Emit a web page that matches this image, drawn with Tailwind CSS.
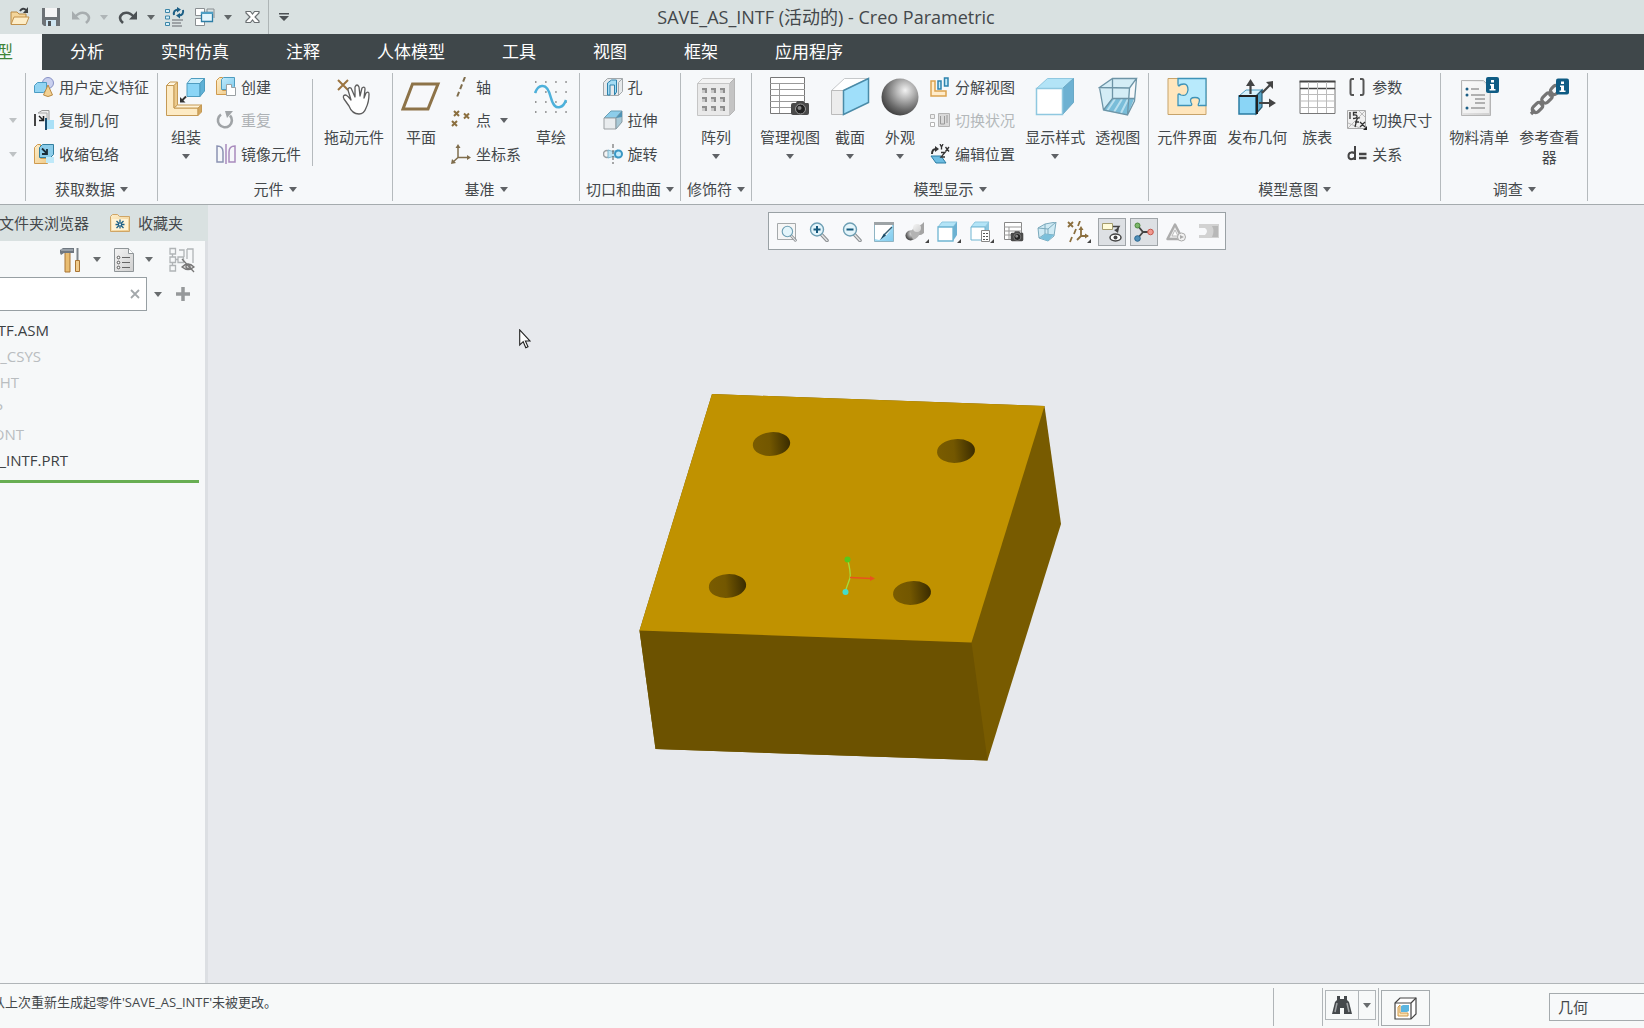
<!DOCTYPE html>
<html lang="zh-CN">
<head>
<meta charset="utf-8">
<meta name="viewport" content="width=device-width, initial-scale=1">
<title>SAVE_AS_INTF (活动的) - Creo Parametric</title>
<script src="https://cdn.jsdelivr.net/npm/@tailwindcss/browser@4"></script>
</head>
<body class="flex h-screen flex-col overflow-hidden bg-[#e7e9ed] font-['Open_Sans','Noto_Sans_CJK_SC',sans-serif] text-[15px] leading-5 text-[#44484b]">

<!-- Shared symbols and gradients -->
<svg class="absolute size-0" aria-hidden="true">
  <defs>
    <symbol id="caret" viewBox="0 0 8 5"><path d="M0 0h8L4 5z" fill="currentColor" opacity=".85"/></symbol>
    <linearGradient id="blueFace" x1="0" y1="0" x2="1" y2="1"><stop offset="0" stop-color="#c4ecfb"/><stop offset="1" stop-color="#7fcbee"/></linearGradient>
    <linearGradient id="greyFace" x1="0" y1="0" x2="1" y2="1"><stop offset="0" stop-color="#f4f4f4"/><stop offset="1" stop-color="#cfcfcf"/></linearGradient>
    <linearGradient id="tan" x1="0" y1="0" x2="1" y2="1"><stop offset="0" stop-color="#fdeecb"/><stop offset="1" stop-color="#efcb8a"/></linearGradient>
    <radialGradient id="ball" cx=".64" cy=".32" r=".7"><stop offset="0" stop-color="#f2f2f2"/><stop offset=".35" stop-color="#b4b4b4"/><stop offset=".75" stop-color="#6b6b6b"/><stop offset="1" stop-color="#444"/></radialGradient>
    <linearGradient id="hole" x1="0" y1="0" x2="1" y2="0"><stop offset="0" stop-color="#7a5c00"/><stop offset=".45" stop-color="#735700"/><stop offset="1" stop-color="#3a2c00"/></linearGradient>
    <symbol id="camera" viewBox="0 0 20 16"><path d="M1 5q0-2 2-2h3l1-2h6l2 2h3q1 0 1 2v8q0 2-2 2H3q-2 0-2-2z" fill="#4a4a4a"/><circle cx="10.500" cy="9" r="5" fill="#222" stroke="#999"/><circle cx="9.500" cy="8" r="2" fill="#888"/></symbol>
    <symbol id="lens" viewBox="0 0 20 20"><path d="M12 12l6 6.500" stroke="#8b8f92" stroke-width="3.500" stroke-linecap="round"/><path d="M12 12l6 6.500" stroke="#e2e4e5" stroke-width="1.500" stroke-linecap="round"/><circle cx="8" cy="7.500" r="6.500" fill="#e4f5fb" stroke="#6e9fb4" stroke-width="1.400"/></symbol>
    <symbol id="info" viewBox="0 0 13 16"><rect width="13" height="16" rx="2" fill="#0f5c84"/><path d="M5 3h3v2.500H5zM4 7h4v5h1.500v1.500h-6V12H5V8.500H4z" fill="#fff"/></symbol>
    <symbol id="more" viewBox="0 0 4 4"><path d="M4 0v4H0z" fill="#444"/></symbol>
  </defs>
</svg>

<!-- Title bar -->
<header class="grid h-[34px] shrink-0 grid-cols-[1fr_auto_1fr] items-center bg-[#d9e1e1]">
  <div class="flex h-full items-center gap-2.5 pl-2.5" role="toolbar" aria-label="快速访问">
    <button aria-label="打开"><svg class="size-5" viewBox="0 0 20 20"><path d="M1 17V5h6l2 2h7v3" fill="#f3d59b" stroke="#b98a45"/><path d="M1 17.500L4 10h15l-3 7.500z" fill="#fdedc8" stroke="#c2924c"/><path d="M10 4q3-4 6-1" fill="none" stroke="#3b3f42" stroke-width="2"/><path d="M18 0v6h-5z" fill="#3b3f42"/></svg></button>
    <button aria-label="保存" class="ml-px"><svg class="size-5" viewBox="0 0 20 20"><path d="M1 1h18v18H3l-2-2z" fill="#6d7276"/><path d="M4 1h12v9H4z" fill="#f5f5f5"/><path d="M5 13h10v6H5z" fill="#cfe6f2"/><path d="M7 14h3v5H7z" fill="#4f5356"/></svg></button>
    <button aria-label="撤消" class="flex items-center gap-[9px] text-[#a7adaf]"><svg class="size-5" viewBox="0 0 20 20"><path d="M4 10q5-6 11-3.500 6 4 0 9.500" fill="none" stroke="currentColor" stroke-width="2.600"/><path d="M1 4v8.500h8z" fill="currentColor"/></svg><svg class="h-[5px] w-2"><use href="#caret"/></svg></button>
    <button aria-label="重做" class="flex items-center gap-[9px] text-[#4c5154]"><svg class="size-5" viewBox="0 0 20 20"><path d="M16 10Q11 4 5 6.500q-6 4 0 9.500" fill="none" stroke="currentColor" stroke-width="2.600"/><path d="M19 4v8.500h-8z" fill="currentColor"/></svg><svg class="h-[5px] w-2"><use href="#caret"/></svg></button>
    <button aria-label="重新生成"><svg class="size-5" viewBox="0 0 20 20"><g fill="#d7f0fa" stroke="#3d86a8"><path d="M.500 2.500h4v3h-4zM.500 9h4v3h-4zM.500 15.500h4v3h-4z"/></g><path d="M7 13h11M7 16h9M7 19h10" stroke="#8a8f92" stroke-width="1.500"/><path d="M9 8q-1-5 4-5.500M18 3q1 5-4 5.500" fill="none" stroke="#1d5f86" stroke-width="2"/><path d="M12 0l4 2.500-4 3zM15 6l-4 2.500 4 3z" fill="#1d5f86"/></svg></button>
    <button aria-label="窗口" class="flex items-center gap-[9px] text-[#4c5154]"><svg class="size-5" viewBox="0 0 20 20"><path d="M.500 1.500h9v7h-9z" fill="#fff" stroke="#8a8f92"/><path d="M.500 11.500h9v7h-9z" fill="#fff" stroke="#8a8f92"/><path d="M12 5V2h7v9" fill="none" stroke="#8a8f92"/><path d="M6.500 5.500h11v9h-11z" fill="#e3f5fc" stroke="#2d7ea6" stroke-width="1.300"/><path d="M6 5h12v2H6z" fill="#4f9fc4"/></svg><svg class="h-[5px] w-2"><use href="#caret"/></svg></button>
    <button aria-label="关闭"><svg class="size-5" viewBox="0 0 20 20"><path d="M4 4.500h4.500L10.500 7l2-2.500H17v1.500L13 10l4 4v1.500h-4.500l-2-2.500-2 2.500H4V14l4-4-4-4z" fill="#fff" stroke="#6a6f72" stroke-width="1.200"/></svg></button>
    <div class="-ml-1 h-full w-px bg-[#aeb5b6]"></div>
    <button aria-label="自定义快速访问工具栏"><svg class="h-2 w-[10px]" viewBox="0 0 10 8"><path d="M0 0h10v1.500H0zM0 3h10L5 8z" fill="#4c5154"/></svg></button>
  </div>
  <h1 class="pl-2 text-[18px] leading-6 whitespace-nowrap">SAVE_AS_INTF (活动的) - Creo Parametric</h1>
  <div></div>
</header>

<!-- Ribbon tabs -->
<nav class="flex h-9 shrink-0 gap-px bg-[#3f474a] text-[17px] text-white" role="tablist">
  <button role="tab" aria-selected="true" class="-mr-px flex w-[42px] items-center justify-end overflow-hidden bg-[#f7f9fa] pr-[29px] text-[#3f8438]">型</button>
  <button role="tab" class="px-7">分析</button>
  <button role="tab" class="px-7">实时仿真</button>
  <button role="tab" class="px-7">注释</button>
  <button role="tab" class="px-7">人体模型</button>
  <button role="tab" class="px-7">工具</button>
  <button role="tab" class="px-7">视图</button>
  <button role="tab" class="px-7">框架</button>
  <button role="tab" class="px-7">应用程序</button>
</nav>

<!-- Ribbon -->
<section class="flex h-[135px] shrink-0 border-b border-[#a5abae] bg-[#f6f8fa]">
  <div class="grid h-[101px] w-[25px] shrink-0 grid-rows-3 items-center justify-center text-[#b4b8ba]">
    <span></span>
    <button aria-label="更多"><svg class="h-[5px] w-2"><use href="#caret"/></svg></button>
    <button aria-label="更多"><svg class="h-[5px] w-2"><use href="#caret"/></svg></button>
  </div>
  <div class="my-[3px] w-px shrink-0 bg-[#b5babd]"></div>

  <div class="flex shrink-0 flex-col px-2">
    <div class="grid h-[101px] grid-rows-3">
      <button class="flex items-center gap-[5px]"><svg class="size-5" viewBox="0 0 20 20"><circle cx="14" cy="6" r="5.500" fill="#c9d0ef" stroke="#8791c4"/><path d="M.500 8.500l3-3h9v7l-3 3h-9z" fill="#93d4f2" stroke="#4a9cc4"/><path d="M14 8l4.500 10q-4.500 3-9 0z" fill="#f2d193" stroke="#b98a45"/></svg>用户定义特征</button>
      <button class="flex items-center gap-[5px]"><svg class="size-5" viewBox="0 0 20 20"><path d="M4 3l4-2.500h7v9l-2 2" fill="#eee" stroke="#9a9a9a"/><path d="M4 3h9v9" fill="none" stroke="#aaa"/><path d="M1 4v12" stroke="#444" stroke-width="2"/><path d="M5 6l4 4M9.500 6v4.500H5" stroke="#222" stroke-width="1.500" fill="none"/><path d="M12 10h8v9h-8z" fill="#a9e0f7"/><path d="M12 8v12" stroke="#1b4f72" stroke-width="2"/></svg>复制几何</button>
      <button class="flex items-center gap-[5px]"><svg class="size-5" viewBox="0 0 20 20"><path d="M.500 3.500l3-3h3v14h7v5H.500z" fill="url(#tan)" stroke="#cf9a4d"/><path d="M5.500 3.500l3-3h11v10l-3 3h-11z" fill="#8ccdea" stroke="#337f9f"/><path d="M8 4.500l4.500 4.500M13 5v5H8" stroke="#1a2d38" stroke-width="1.800" fill="none"/><path d="M12 13h8v6h-8z" fill="#bfe9f9"/></svg>收缩包络</button>
    </div>
    <button class="flex h-[33px] items-center justify-center gap-[5px] pt-[3px]">获取数据<svg class="h-[5px] w-2"><use href="#caret"/></svg></button>
  </div>
  <div class="my-[3px] w-px shrink-0 bg-[#b5babd]"></div>

  <div class="flex shrink-0 flex-col px-2">
    <div class="flex h-[101px] gap-2.5">
      <button class="flex w-10 flex-col items-center pt-1.5"><svg class="size-10" viewBox="0 0 40 40"><g stroke="#c59a55" stroke-linejoin="round"><path d="M.500 9.500H8V32h24v7.500H.500z" fill="#fdebc5"/><path d="M.500 9.500L4 6h7.500L8 9.500z" fill="#fff6e0"/><path d="M8 9.500L11.500 6v23L8 32z" fill="#eccb8d"/><path d="M8 32l3.500-3h24L32 32z" fill="#fff3d8"/><path d="M32 32l3.500-3v7L32 39.500z" fill="#d3a75f"/></g><g stroke="#4f9dc0" stroke-linejoin="round"><path d="M21 7.500h13v13H21z" fill="#8ad5f6"/><path d="M21 7.500l4-5h13.500l-4.500 5z" fill="#c9eefb"/><path d="M34 7.500l4.500-5V15L34 20.500z" fill="#5fb1d6"/></g><path d="M20 20.500l-4 4" stroke="#333" stroke-width="1.800"/><path d="M14 21v5.500h5.500z" fill="#333"/></svg><span class="mt-[11px]">组装</span><svg class="mt-[7px] h-[5px] w-2"><use href="#caret"/></svg></button>
      <div class="grid grid-rows-3">
        <button class="flex items-center gap-[5px]"><svg class="size-5" viewBox="0 0 20 20"><path d="M.500 3.500l3-3h3v13h6v4H.500z" fill="url(#tan)" stroke="#cf9a4d"/><path d="M5.500 2.500l2-2h11v9l-2 3h-11z" fill="url(#blueFace)" stroke="#4f9dc0"/><path d="M10.500 7.500h5v3h4v8h-9z" fill="#fff" stroke="#9aa0a3"/></svg>创建</button>
        <button class="flex items-center gap-[5px] text-[#aeb2b5]" disabled><svg class="size-5" viewBox="0 0 20 20"><path d="M5 4.500a7 7 0 1 0 9 1" fill="none" stroke="#a0a4a7" stroke-width="2.600"/><path d="M9 1h8l-6 7z" fill="#a0a4a7"/></svg>重复</button>
        <button class="flex items-center gap-[5px]"><svg class="size-5" viewBox="0 0 20 20" fill="none" stroke-width="1.500"><path d="M1 2q6 0 6 6v10H1z" stroke="#8c93b3"/><path d="M19 2q-6 0-6 6v10h6z" stroke="#a98bbd"/><path d="M10 0v20" stroke="#a98bbd"/></svg>镜像元件</button>
      </div>
      <div class="mt-[9px] ml-px h-[87px] w-px bg-[#b5babd]"></div>
      <button class="ml-px flex flex-col items-center pt-1.5"><svg class="size-10" viewBox="0 0 40 40"><path d="M4 4l10 10M14 4L4 14" stroke="#9b7440" stroke-width="2"/><path d="M14 14l4 4" stroke="#555"/><path d="M16 30l-5-7q-2-4 2-4 2 1 5 5l-3-10q0-3 3-2l4 9V11q2-4 4 0l1 9 2-8q3-2 3 1l-1 9 2-5q3-2 3 1 0 8-3 14-2 6-7 6-7 0-10-8z" transform="translate(-1 0)" fill="#fff" stroke="#5c5c5c" stroke-width="1.300" stroke-linejoin="round"/></svg><span class="mt-[11px]">拖动元件</span></button>
    </div>
    <button class="flex h-[33px] items-center justify-center gap-[5px] pt-[3px]">元件<svg class="h-[5px] w-2"><use href="#caret"/></svg></button>
  </div>
  <div class="my-[3px] w-px shrink-0 bg-[#b5babd]"></div>

  <div class="flex shrink-0 flex-col px-2">
    <div class="flex h-[101px] gap-2.5">
      <button class="flex w-10 flex-col items-center pt-1.5"><svg class="size-10" viewBox="0 0 40 40"><path d="M11.500 8h25.500l-10 25H2z" fill="#f7f8fa" stroke="#8d7348" stroke-width="3"/></svg><span class="mt-[11px]">平面</span></button>
      <div class="grid grid-rows-3">
        <button class="flex items-center gap-[5px]"><svg class="size-5" viewBox="0 0 20 20"><path d="M14 0L6 20" stroke="#7f6d4c" stroke-width="2" stroke-dasharray="5 3"/></svg>轴</button>
        <button class="flex items-center gap-[5px]"><svg class="size-5" viewBox="0 0 20 20"><path d="M3 1l5 5M8 1L3 6M13 3.500l5 5M18 3.500l-5 5M1 11l5 5M6 11l-5 5" stroke="#8b6f3f" stroke-width="2"/></svg>点<svg class="ml-1 h-[5px] w-2"><use href="#caret"/></svg></button>
        <button class="flex items-center gap-[5px]"><svg class="size-5" viewBox="0 0 20 20"><path d="M7 3v10.500h10M7 13.500l-5 4.500" fill="none" stroke="#7f6d4c" stroke-width="1.500"/><path d="M7 0l2.500 4h-5zM20 13.500L16 16v-5zM0 20l1-5 4 4z" fill="#7f6d4c"/></svg>坐标系</button>
      </div>
      <button class="flex w-10 flex-col items-center pt-1.5"><svg class="size-10" viewBox="0 0 40 40"><path d="M4 6h32M4 16h32M4 26h32M4 36h32" stroke="#777" stroke-width="1.500" stroke-dasharray="1.500 8.600"/><path d="M4 17Q7 9 12 10q5 0 8 12 3 11 9 9 4-1 6-7" fill="none" stroke="#4db1db" stroke-width="2.500"/></svg><span class="mt-[11px]">草绘</span></button>
    </div>
    <button class="flex h-[33px] items-center justify-center gap-[5px] pt-[3px]">基准<svg class="h-[5px] w-2"><use href="#caret"/></svg></button>
  </div>
  <div class="my-[3px] w-px shrink-0 bg-[#b5babd]"></div>

  <div class="flex shrink-0 flex-col items-center px-1.5">
    <div class="grid h-[101px] grid-rows-3">
      <button class="flex items-center gap-[5px]"><svg class="size-5" viewBox="0 0 20 20"><path d="M.500 5.500l4-4h15v13l-4 4H.500z" fill="#e6e9eb" stroke="#a3a8ab"/><path d="M15.500 18.500v-13l4-4" fill="none" stroke="#a3a8ab"/><path d="M4.500 18V6l4-3h5v12l-2 3V8H7v10z" fill="#a4dcf4" stroke="#2e83ad"/></svg>孔</button>
      <button class="flex items-center gap-[5px]"><svg class="size-5" viewBox="0 0 20 20"><path d="M1 8l7-7h11l-6 7z" fill="#8ccdea" stroke="#6a9fb5"/><path d="M1 8h12v11H1z" fill="#e9ecee" stroke="#9ba0a3"/><path d="M13 8l6-7v11l-6 7z" fill="#a9c9d6" stroke="#8a9ba3"/><path d="M13 8l6-7v6z" fill="#4e93b4"/></svg>拉伸</button>
      <button class="flex items-center gap-[5px]"><svg class="size-5" viewBox="0 0 20 20"><circle cx="4" cy="10" r="3.500" fill="#f4f4f4" stroke="#9ba0a3" stroke-width="1.500"/><path d="M5 6q5 3 10 0v8q-5-3-10 0z" fill="#bfe4f3" stroke="#7fb6cd"/><circle cx="15.500" cy="10" r="3.500" fill="#c4ebfa" stroke="#3a97c4" stroke-width="2"/><path d="M10 0v20" stroke="#555" stroke-dasharray="4 2"/></svg>旋转</button>
    </div>
    <button class="flex h-[33px] items-center justify-center gap-[5px] pt-[3px]">切口和曲面<svg class="h-[5px] w-2"><use href="#caret"/></svg></button>
  </div>
  <div class="my-[3px] w-px shrink-0 bg-[#b5babd]"></div>

  <div class="flex shrink-0 flex-col items-center px-1.5">
    <div class="flex h-[101px]">
      <button class="flex w-10 flex-col items-center pt-1.5"><svg class="size-10" viewBox="0 0 40 40"><path d="M1.500 7.500l5-5h32l-5 5z" fill="#f3f3f3" stroke="#ccc"/><path d="M33.500 7.500l5-5v32l-5 5z" fill="#c4c4c4" stroke="#b5b5b5"/><path d="M1.500 7.500h32v32h-32z" fill="#e9e9e9" stroke="#c5c5c5"/><g fill="#8d8d8d"><path d="M6 12h5v5H6zM15 12h5v5h-5zM24 12h5v5h-5zM6 21h5v5H6zM15 21h5v5h-5zM24 21h5v5h-5zM6 30h5v5H6zM15 30h5v5h-5zM24 30h5v5h-5z"/></g><g fill="#c8c8c8"><path d="M6 14h3v3H6zM15 14h3v3h-3zM24 14h3v3h-3zM6 23h3v3H6zM15 23h3v3h-3zM24 23h3v3h-3zM6 32h3v3H6zM15 32h3v3h-3zM24 32h3v3h-3z"/></g></svg><span class="mt-[11px]">阵列</span><svg class="mt-[7px] h-[5px] w-2"><use href="#caret"/></svg></button>
    </div>
    <button class="flex h-[33px] items-center justify-center gap-[5px] pt-[3px]">修饰符<svg class="h-[5px] w-2"><use href="#caret"/></svg></button>
  </div>
  <div class="my-[3px] w-px shrink-0 bg-[#b5babd]"></div>

  <div class="flex shrink-0 flex-col px-2">
    <div class="flex h-[101px] gap-2.5">
      <button class="flex flex-col items-center pt-1.5"><svg class="size-10" viewBox="0 0 40 40"><path d="M.500 1.500h34v36H.500z" fill="#fff" stroke="#777"/><path d="M0 7.500h35M0 13.500h35M0 19.500h35M0 25.500h35M0 31.500h35M9.500 7v30" stroke="#999"/><use href="#camera" x="20" y="24" width="20" height="16"/></svg><span class="mt-[11px]">管理视图</span><svg class="mt-[7px] h-[5px] w-2"><use href="#caret"/></svg></button>
      <button class="flex w-10 flex-col items-center pt-1.5"><svg class="size-10" viewBox="0 0 40 40"><path d="M1.500 14.500l13-12h24l-25 12z" fill="#fff" stroke="#c5c8ca"/><path d="M1.500 14.500h12v24h-12z" fill="#ececec" stroke="#bbb"/><path d="M13.500 14.500l25-12v24l-25 12z" fill="#9fdffa" stroke="#4a8ba8" stroke-width="1.500"/></svg><span class="mt-[11px]">截面</span><svg class="mt-[7px] h-[5px] w-2"><use href="#caret"/></svg></button>
      <button class="flex w-10 flex-col items-center pt-1.5"><svg class="size-10" viewBox="0 0 40 40"><circle cx="20" cy="21" r="18.500" fill="url(#ball)"/></svg><span class="mt-[11px]">外观</span><svg class="mt-[7px] h-[5px] w-2"><use href="#caret"/></svg></button>
      <div class="grid grid-rows-3">
        <button class="flex items-center gap-[5px]"><svg class="size-5" viewBox="0 0 20 20"><path d="M1 4h4v10h11v5H1z" fill="#ffeccb" stroke="#dba24f" stroke-width="1.500"/><path d="M8 4h3v8H8zM14.500 1h3.500v8h-3.500z" fill="#c4ebfa" stroke="#2e83ad" stroke-width="1.500"/></svg>分解视图</button>
        <button class="flex items-center gap-[5px] text-[#b4b8ba]" disabled><svg class="size-5" viewBox="0 0 20 20" stroke="#b4b4b4"><path d="M.500 4.500h4v4h-4z" fill="#eee"/><path d="M.500 12.500h4v4h-4z" fill="#fff"/><path d="M8.500 3.500h11v13h-11z" fill="#d9d9d9"/><path d="M10.500 6v8h4V6M17 5v8" stroke="#999" fill="none"/></svg>切换状况</button>
        <button class="flex items-center gap-[5px]"><svg class="size-5" viewBox="0 0 20 20"><path d="M1 12h10l5 7H6z" fill="#6dbde2" stroke="#2b7ca3"/><path d="M2 10q0-5 4-5" stroke="#333" stroke-width="2" fill="none"/><path d="M5 2l4 3-4 3z" fill="#333"/><path d="M10 0l1.500 3L13 0M11.500 3v2.500M15.500 3l3.500 4.500M19 3l-3.500 4.500M11 8.500h4l-4 4.500h4" stroke="#333" stroke-width="1.300" fill="none"/></svg>编辑位置</button>
      </div>
      <button class="flex flex-col items-center pt-1.5"><svg class="size-10" viewBox="0 0 40 40"><path d="M1.500 12.500l11-10h26l-11 10z" fill="#b3e4f7" stroke="#8fc8e0"/><path d="M27.500 12.500l11-10v24l-11 12z" fill="#6db1d2" stroke="#6aa9c6"/><path d="M1.500 12.500h26v26h-26z" fill="#fff" stroke="#8fc8e0" stroke-width="1.500"/></svg><span class="mt-[11px]">显示样式</span><svg class="mt-[7px] h-[5px] w-2"><use href="#caret"/></svg></button>
      <button class="flex flex-col items-center pt-1.5"><svg class="size-10" viewBox="0 0 40 40"><path d="M1.500 10.500l13-8h24l-6 9 -3 27.500-24-4z" fill="#d4edf6"/><path d="M5.500 34l9-12h22l-7 17z" fill="#79bdd9"/><path d="M9 35l8-12M16 36l8-13M23 37l7-14" stroke="#b8dfee" stroke-width="2"/><path d="M1.500 11.500l13-9h24l-7 9.500zM1.500 11.500l4 22.500 24 5 2-27M29.500 39l7-14 2-22.500M14.500 2.500v20l-9 11.500M14.500 22.500h22" fill="none" stroke="#6d94a6" stroke-width="1.300"/></svg><span class="mt-[11px]">透视图</span></button>
    </div>
    <button class="flex h-[33px] items-center justify-center gap-[5px] pt-[3px]">模型显示<svg class="h-[5px] w-2"><use href="#caret"/></svg></button>
  </div>
  <div class="my-[3px] w-px shrink-0 bg-[#b5babd]"></div>

  <div class="flex shrink-0 flex-col px-2">
    <div class="flex h-[101px] gap-2.5">
      <button class="flex flex-col items-center pt-1.5"><svg class="size-10" viewBox="0 0 40 40"><path d="M1 2.500h38v36H1z" fill="#ffe6bd" stroke="#c7a36a"/><path d="M11 2.500h28v27h-6q-3 1-1-3 2-5-4-5t-4 5q2 3-1 3H11V19q0-2 3 0 6 2 7-5 0-6-4-6t-5 2q-1 0-1-2z" fill="#b8eafc" stroke="#3e93b8" stroke-width="1.300"/></svg><span class="mt-[11px]">元件界面</span></button>
      <button class="flex flex-col items-center pt-1.5"><svg class="size-10" viewBox="0 0 40 40"><path d="M2 20l7-6h17l-7 6z" fill="#d6f2fc" stroke="#4f9dc0"/><path d="M2 20h17v18H2z" fill="#8ad5f6" stroke="#2b7ca3" stroke-width="1.500"/><path d="M19 20l6-6v17l-6 7z" fill="#57a6c9" stroke="#2b5f78" stroke-width="1.200"/><path d="M2 20h18v18" fill="none" stroke="#222" stroke-width="2"/><path d="M13.500 18V8M25 17l8-8M22 27h11" stroke="#444" stroke-width="2.200"/><path d="M13.500 3l4.500 7H9zM36 5v8l-7-7zM39 27l-7 4.500v-9z" fill="#444"/></svg><span class="mt-[11px]">发布几何</span></button>
      <button class="flex w-10 flex-col items-center pt-1.5"><svg class="size-10" viewBox="0 0 40 40"><path d="M3 5.500h35v32H3z" fill="#fff" stroke="#777"/><path d="M3 12.500h35" stroke="#444" stroke-width="1.500"/><path d="M2.500 5.500h36" stroke="#444" stroke-width="2"/><path d="M3 18.500h35M3 25h35M3 31.500h35M11.500 6v31M20.500 6v31M29.500 6v31" stroke="#bbb"/></svg><span class="mt-[11px]">族表</span></button>
      <div class="grid grid-rows-3">
        <button class="flex items-center gap-[5px]"><svg class="size-5" viewBox="0 0 20 20"><path d="M7 2H5Q3.500 2 3.500 4v12q0 2 1.500 2h2M13 2h2q1.500 0 1.500 2v12q0 2-1.500 2h-2" fill="none" stroke="#555" stroke-width="2"/></svg>参数</button>
        <button class="flex items-center gap-[5px]"><svg class="size-5" viewBox="0 0 20 20"><path d="M.500.500h18v18H.500z" fill="#f0f0f0" stroke="#aaa"/><path d="M1 18L18 1M1 13L13 18M12 1l6 6" stroke="#bbb"/><path d="M3 2v7M10 2.500H6.500v2.500q3.500-.500 3.500 1.500T6 8.500M13 8q-3-1-3.500 3L8 17M8 12h4M13 12l5 5M18 12l-5 5" fill="none" stroke="#333" stroke-width="1.300"/><path d="M20 16v4h-4z" fill="#222"/></svg>切换尺寸</button>
        <button class="flex items-center gap-[5px]"><svg class="size-5" viewBox="0 0 20 20"><path d="M8 2v14M8 9.500Q6 8 4 8.500 1.500 9 1.500 12t2.500 3.200q2.500 0 4-1.700" fill="none" stroke="#444" stroke-width="2"/><path d="M12 10h7.500M12 14h7.500" stroke="#444" stroke-width="2.500"/></svg>关系</button>
      </div>
    </div>
    <button class="flex h-[33px] items-center justify-center gap-[5px] pt-[3px]">模型意图<svg class="h-[5px] w-2"><use href="#caret"/></svg></button>
  </div>
  <div class="my-[3px] w-px shrink-0 bg-[#b5babd]"></div>

  <div class="flex shrink-0 flex-col px-2">
    <div class="flex h-[101px] gap-2.5">
      <button class="flex flex-col items-center pt-1.5"><svg class="size-10" viewBox="0 0 40 40"><path d="M2.500 4.500h22l7 7v28h-29z" fill="url(#greyFace)" stroke="#b5b5b5"/><path d="M4 6h20l6 6v25H4z" fill="#fff" opacity=".6"/><path d="M12 13h8M12 19h14M16 23h10M16 27h10M12 32h14" stroke="#9a9a9a" stroke-width="1.400"/><g fill="#1d5f86"><circle cx="8" cy="13" r="1.500"/><circle cx="8" cy="19" r="1.500"/><circle cx="8" cy="32" r="1.500"/></g><use href="#info" x="27" y="1" width="13" height="16"/></svg><span class="mt-[11px]">物料清单</span></button>
      <button class="flex w-[60px] flex-col items-center pt-1.5"><svg class="size-10" viewBox="0 0 40 40" fill="none"><g stroke="#757575" stroke-width="3.200"><rect x="-6" y="-3.500" width="12" height="7" rx="3.500" transform="translate(8.500 31.500) rotate(-45)"/><rect x="-6" y="-3.500" width="12" height="7" rx="3.500" transform="translate(18 22) rotate(-45)"/><rect x="-5" y="-3.500" width="10" height="7" rx="3.500" transform="translate(26 14) rotate(-45)"/><path d="M11 29l4-4M20 20l4-4M2 38l4-4"/></g><use href="#info" x="27" y="2" width="13" height="17"/></svg><span class="mt-[11px]">参考查看器</span></button>
    </div>
    <button class="flex h-[33px] items-center justify-center gap-[5px] pt-[3px]">调查<svg class="h-[5px] w-2"><use href="#caret"/></svg></button>
  </div>
  <div class="my-[3px] w-px shrink-0 bg-[#b5babd]"></div>
</section>

<main class="flex min-h-0 flex-1">
  <!-- Navigator -->
  <aside class="flex w-[208px] shrink-0 flex-col border-r-[3px] border-[#dcdfe3] bg-[#f6f8f9]">
    <div class="-mr-[3px] flex h-9 shrink-0 items-center bg-[#d9e1e1]">
      <button class="flex w-[89px] justify-end whitespace-nowrap">文件夹浏览器</button>
      <button class="ml-[21px] flex items-center gap-2"><svg class="size-5" viewBox="0 0 20 20"><path d="M.500 18.500v-15l2-2h5l2 2h10v15z" fill="url(#tan)" stroke="#cfa566"/><path d="M2 6h16v11H2z" fill="#fff3d6"/><path d="M10 6.500v9M6.500 8l7 7M13.500 8l-7 7M5.500 11.500h9" stroke="#1d5f86" stroke-width="1.300"/><circle cx="10" cy="11.500" r="1" fill="#fff"/></svg>收藏夹</button>
    </div>
    <div class="flex h-9 items-center gap-3 pt-px pl-[60px] text-[#4f5356]">
      <button class="flex items-center gap-3" aria-label="设置"><svg class="h-[26px] w-[21px]" viewBox="0 0 21 26"><path d="M5 5h5v20H5z" fill="#e9bd72" stroke="#a87534"/><path d="M0 6V3l3-2h11v5H4L1 8z" fill="#6f7780"/><path d="M1 3h12" stroke="#c3cad0"/><path d="M17.500 1v12" stroke="#7e868c" stroke-width="2"/><path d="M15.500 13.500h4v11h-4z" fill="#f0cb8b" stroke="#a87534"/></svg><svg class="h-[5px] w-2"><use href="#caret"/></svg></button>
      <button class="ml-px flex items-center gap-[11px]" aria-label="显示"><svg class="h-[26px] w-5" viewBox="0 0 20 26"><path d="M.500 1.500h14l5 5v18H.500z" fill="url(#greyFace)" stroke="#8f9598"/><path d="M14.500 1.500v5h5" fill="#fff" stroke="#8f9598"/><path d="M8 10.500h8M8 15.500h8M8 20.500h8" stroke="#666"/><g fill="#fff" stroke="#555"><circle cx="4.500" cy="10.500" r="1.300"/><circle cx="4.500" cy="15.500" r="1.300"/><circle cx="4.500" cy="20.500" r="1.300"/></g></svg><svg class="h-[5px] w-2"><use href="#caret"/></svg></button>
      <button class="ml-1" aria-label="树过滤器"><svg class="size-[26px]" viewBox="0 0 26 26" fill="none" stroke="#b0b4b6" stroke-width="1.300"><path d="M1 1.500h5.500V7H1zM1 10h5.500v5.500H1zM1 18.500h5.500V24H1zM9 10h5.500v5.500H9zM3.500 7v3M3.500 15.500v3M6.500 12.500H9M10 3h5v7M18 2h6v14M18 2v10"/><path d="M13 20q6-6 12 0-6 5-12 0z" fill="#ddd" stroke="#777"/><circle cx="19" cy="19.500" r="2" stroke="#777"/><path d="M13 12l12 13" stroke="#777"/></svg></button>
    </div>
    <div class="flex h-[34px] items-center text-[#4f5356]">
      <div class="flex h-full w-[147px] items-center border border-l-0 border-[#979fa3] bg-white pr-1.5">
        <input type="text" aria-label="搜索树" class="min-w-0 flex-1 bg-transparent px-1 outline-none">
        <button aria-label="清除"><svg class="size-[10px]" viewBox="0 0 10 10"><path d="M1 1l8 8M9 1L1 9" stroke="#a3a8ab" stroke-width="1.800"/></svg></button>
      </div>
      <button class="ml-[7px]" aria-label="搜索选项"><svg class="h-[5px] w-2"><use href="#caret"/></svg></button>
      <button class="ml-[14px]" aria-label="添加"><svg class="size-[14px]" viewBox="0 0 14 14"><path d="M7 0v14M0 7h14" stroke="#96999b" stroke-width="3.500"/></svg></button>
    </div>
    <ul class="mt-1.5 mr-1.5 border-b-[3px] border-[#68ae53] pb-[7px] text-[15px] leading-[26px] whitespace-nowrap text-[#b9bdc0]">
      <li class="flex w-[49px] justify-end text-[#3c4043]">TF.ASM</li>
      <li class="flex w-[41px] justify-end">_CSYS</li>
      <li class="flex w-[19px] justify-end">GHT</li>
      <li class="flex w-[3px] justify-end">P</li>
      <li class="flex w-6 justify-end">ONT</li>
      <li class="flex w-[68px] justify-end text-[#3c4043]">_INTF.PRT</li>
    </ul>
  </aside>

  <!-- Graphics window -->
  <section class="relative flex-1 overflow-hidden">
    <!-- Model: block with four holes and the spin-centre triad -->
    <svg class="absolute top-[180px] left-[422px] h-[386px] w-[442px]" viewBox="630 385 442 386" aria-label="SAVE_AS_INTF">
      <path d="M712 394L1044.500 406 1061 524 987.500 760.500 655.500 749 639.500 630.500z" fill="#785b00"/>
      <path d="M639.500 630.500L971.500 642.500 987.500 760.500 655.500 749z" fill="#6c5200"/>
      <path d="M712 394L1044.500 406 971.500 642.500 639.500 630.500z" fill="#c09200"/>
      <g fill="url(#hole)">
        <ellipse cx="771.500" cy="444" rx="18.700" ry="11.800" transform="rotate(-5 771.500 444)"/>
        <ellipse cx="956" cy="451" rx="19" ry="11.800" transform="rotate(-5 956 451)"/>
        <ellipse cx="727.500" cy="586" rx="18.700" ry="11.800" transform="rotate(-5 727.500 586)"/>
        <ellipse cx="912" cy="593" rx="19" ry="11.800" transform="rotate(-5 912 593)"/>
      </g>
      <path d="M847.500 559Q851 572 850 578L845 592" fill="none" stroke="#a5dc3a" stroke-width="1.300"/>
      <path d="M850 577.500l21 1" stroke="#e8531f" stroke-width="1.300"/>
      <path d="M870 576l5 2.500-5 2.500z" fill="#e8531f"/>
      <circle cx="847.500" cy="559.500" r="3" fill="#56c81c"/>
      <circle cx="845.500" cy="592" r="3" fill="#45dccb"/>
    </svg>

    <!-- In-graphics toolbar -->
    <div class="absolute top-[7px] left-[560px] flex h-[38px] w-[458px] items-center justify-between border border-[#9aa1a5] bg-[#f8f9fb] pt-px pr-0.5 pl-1" role="toolbar" aria-label="图形工具栏">
      <button class="flex size-7 items-center justify-center" aria-label="重新调整"><svg class="size-5" viewBox="0 0 20 20"><path d="M.500 1.500h18v16H.500z" fill="#f6f6f6" stroke="#a5a9ab"/><use href="#lens" x="4" y="3" width="16" height="17"/></svg></button>
      <button class="flex size-7 items-center justify-center" aria-label="放大"><svg class="size-5" viewBox="0 0 20 20"><use href="#lens"/><path d="M8 4v7M4.500 7.500h7" stroke="#16597d" stroke-width="2"/></svg></button>
      <button class="flex size-7 items-center justify-center" aria-label="缩小"><svg class="size-5" viewBox="0 0 20 20"><use href="#lens"/><path d="M4.500 7.500h7" stroke="#16597d" stroke-width="2"/></svg></button>
      <button class="flex size-7 items-center justify-center" aria-label="重画"><svg class="size-5" viewBox="0 0 20 20"><path d="M.500.500h19v19H.500z" fill="url(#blueFace)" stroke="#8fb4c3"/><path d="M0 0h20v3H0z" fill="#9da3a6"/><path d="M1 3h17v2Q14 14 5 18l-4-1z" fill="#fff"/><path d="M18 5L10 13" stroke="#355d70" stroke-width="1.500"/><path d="M10 11.500l2 2L6 18z" fill="#174a66"/></svg></button>
      <button class="flex size-7 items-center justify-center" aria-label="着色"><svg class="h-[22px] w-6 shrink-0" viewBox="0 0 24 22"><path d="M10 4q5 2 9-3v11q-3 3-8 2z" fill="#a4a4a4"/><circle cx="5.500" cy="14.500" r="5" fill="url(#ball)"/><path d="M5 10q3-1 4-4l6 5q-1 6-7 8" fill="#b3b3b3"/><circle cx="12" cy="7" r="4" fill="url(#greyFace)"/><use href="#more" x="20" y="18" width="4" height="4"/></svg></button>
      <button class="flex size-7 items-center justify-center" aria-label="显示样式"><svg class="h-[22px] w-6 shrink-0" viewBox="0 0 24 22"><path d="M1 6l4-5h15l-4 5z" fill="#b3e4f7" stroke="#8fc8e0"/><path d="M16 6l4-5v13l-4 6z" fill="#6db1d2"/><path d="M1 6h15v14H1z" fill="#fff" stroke="#6fb5d2" stroke-width="1.300"/><use href="#more" x="20" y="18" width="4" height="4"/></svg></button>
      <button class="flex size-7 items-center justify-center" aria-label="已保存方向"><svg class="h-[22px] w-6 shrink-0" viewBox="0 0 24 22"><path d="M1 6l4-5h14l-4 5z" fill="#b3e4f7" stroke="#8fc8e0"/><path d="M15 6l4-5v13l-4 5z" fill="#8cc6df"/><path d="M1 6h14v13H1z" fill="#fff" stroke="#6fb5d2"/><path d="M11.500 9.500h8v11h-8z" fill="#fff" stroke="#888"/><path d="M13 12.500h2M16 12.500h2M13 15.500h2M16 15.500h2M13 18.500h2M16 18.500h2" stroke="#555"/><use href="#more" x="20" y="18" width="4" height="4"/></svg></button>
      <button class="flex size-7 items-center justify-center" aria-label="视图管理器"><svg class="size-5" viewBox="0 0 20 20"><path d="M.500.500h17v17H.500z" fill="#fff" stroke="#888"/><path d="M0 5h18M0 9h18M0 13h18M5 5v12" stroke="#999"/><use href="#camera" x="6" y="8.500" width="14" height="11.500"/></svg></button>
      <button class="flex size-7 items-center justify-center" aria-label="透视图"><svg class="size-5" viewBox="0 0 20 20"><path d="M1 6l7-4 11-2-2 14-6 5-9-3z" fill="#cfeaf4" stroke="#7ba9bc"/><path d="M1 6l10 1 8-7M11 7v12M2 16l6-4 9 1M8 2v10" fill="none" stroke="#7ba9bc"/><path d="M3 16l5-4 9 1-6 6z" fill="#7cc0db"/></svg></button>
      <button class="flex size-7 items-center justify-center" aria-label="基准显示"><svg class="h-[22px] w-6 shrink-0" viewBox="0 0 24 22"><path d="M1 1l5 5M6 1L1 6M13 0l-2 5M9 8l-2 5M5 16l-2 5M14 8v7h7M14 15l-4 4" stroke="#8b6f3f" stroke-width="1.800" fill="none"/><path d="M14 5l2.500 4h-5zM22 15l-4 2.500v-5z" fill="#8b6f3f"/><use href="#more" x="20" y="18" width="4" height="4"/></svg></button>
      <button class="flex size-7 items-center justify-center border border-[#a0a5a9] bg-[#dde0e4]" aria-label="注释显示"><svg class="size-5 shrink-0" viewBox="0 0 20 20"><path d="M.500 1.500h10v6H.500z" fill="#fffbd9" stroke="#a59c6c"/><path d="M11 4.500h6L14 9" fill="none" stroke="#444" stroke-width="1.500"/><path d="M12 8l5-2-1 5z" fill="#444"/><ellipse cx="13.500" cy="15.500" rx="5.500" ry="3.500" fill="#fff" stroke="#444" stroke-width="1.500"/><circle cx="13.500" cy="15.500" r="2" fill="#444"/></svg></button>
      <button class="flex size-7 items-center justify-center border border-[#a0a5a9] bg-[#dde0e4]" aria-label="旋转中心"><svg class="size-5 shrink-0" viewBox="0 0 20 20"><path d="M4 4l5 6h7M9 10l-5 6" fill="none" stroke="#444" stroke-width="1.800"/><circle cx="3.500" cy="3.500" r="2.500" fill="#7cb56a" stroke="#4c8a3d"/><circle cx="16.500" cy="10" r="2.800" fill="#f09a90" stroke="#c5554a"/><circle cx="3.500" cy="16.500" r="2.800" fill="#5190b8" stroke="#2a6690"/></svg></button>
      <button class="flex size-7 items-center justify-center" aria-label="仿真"><svg class="size-5" viewBox="0 0 20 20"><path d="M9 2.500L16.500 17H1.500z" fill="#ececec" stroke="#adadad" stroke-width="2.500" stroke-linejoin="round"/><path d="M9 8l3 6H6z" fill="#fff" stroke="#bbb"/><circle cx="15.500" cy="15" r="4" fill="#f2f2f2" stroke="#aaa"/><path d="M14 13l4 2-4 2z" fill="#aaa"/></svg></button>
      <button class="flex size-7 items-center justify-center" aria-label="暂停"><svg class="size-5" viewBox="0 0 20 20"><path d="M0 2h20v14H0v-3h6q4-4 0-7H0z" fill="#d2d2d2"/><path d="M13 4h6v11h-6q3-6 0-11z" fill="#b8b8b8"/></svg></button>
    </div>

    <!-- Mouse pointer -->
    <svg class="absolute top-[124px] left-[311px] h-5 w-3" viewBox="0 0 12 20"><path d="M.700.900v15l3.500-3.200 2.600 6 2.200-1-2.600-5.700h4.700z" fill="#fff" stroke="#222" stroke-width="1.100"/></svg>
  </section>
</main>

<!-- Status bar -->
<footer class="flex h-[45px] shrink-0 overflow-hidden border-t border-[#b0b5b8] bg-[#f7f9f9]">
  <p class="-ml-2 flex-1 pt-2 text-[13px] leading-5 whitespace-nowrap">从上次重新生成起零件'SAVE_AS_INTF'未被更改。</p>
  <div class="mt-1 mr-12 h-[38px] w-px bg-[#b0b5b8]"></div>
  <div class="mt-1 mr-0.5 h-[38px] w-px bg-[#b0b5b8]"></div>
  <div class="mt-1.5 mr-0.5 flex h-[30px] w-[51px] border border-[#b0b5b8]">
    <button class="flex flex-1 items-center justify-center border-r border-[#b0b5b8]" aria-label="查找"><svg class="size-5" viewBox="0 0 20 20"><path d="M5 1h3v3h4V1h3v4l2 2 3 12h-8v-6H8v6H0L3 7l2-2z" fill="#45494c"/><path d="M5 8L3 17M15 8l2 9" stroke="#a0a4a6" stroke-width="1.500"/></svg></button>
    <button class="flex w-4 items-center justify-center text-[#4f5356]" aria-label="查找选项"><svg class="h-[5px] w-2"><use href="#caret"/></svg></button>
  </div>
  <div class="mt-1 mr-0.5 h-[38px] w-px bg-[#b0b5b8]"></div>
  <button class="mt-1.5 mr-[119px] flex h-9 w-[49px] items-center justify-center border border-[#a5abae]" aria-label="选择过滤"><svg class="h-[23px] w-[23px]" viewBox="0 0 23 23"><path d="M1 6l5-5h16v16l-5 5H1z" fill="#fff" stroke="#444" stroke-width="1.200"/><path d="M1 6h16v16M17 6l5-5" fill="none" stroke="#444" stroke-width="1.200"/><path d="M4 10l2-2v8h8v3H4z" fill="#fbe3b5" stroke="#cf9a4d"/><path d="M7 9l2-1h6v6l-2 1H7z" fill="#5bb5e0"/></svg></button>
  <select aria-label="选择过滤器" class="mt-[9px] -mr-10 h-7 w-[135px] appearance-none border border-[#a5abae] bg-[#f7f9fa] px-2 text-[15px] leading-5"><option>几何</option></select>
</footer>
</body>
</html>
